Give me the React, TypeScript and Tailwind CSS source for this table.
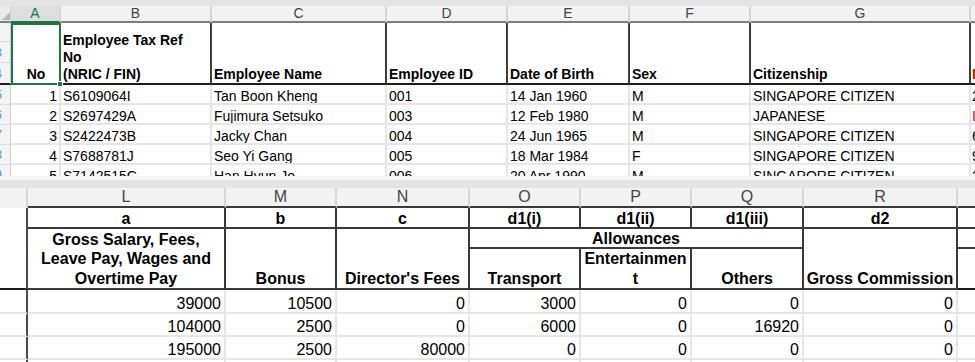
import React from 'react'

const topRows = [
  { n: '5', cells: ['1', 'S6109064I', 'Tan Boon Kheng', '001', '14 Jan 1960', 'M', 'SINGAPORE CITIZEN'], h: '2', hRed: false },
  { n: '6', cells: ['2', 'S2697429A', 'Fujimura Setsuko', '003', '12 Feb 1980', 'M', 'JAPANESE'], h: 'I', hRed: true },
  { n: '7', cells: ['3', 'S2422473B', 'Jacky Chan', '004', '24 Jun 1965', 'M', 'SINGAPORE CITIZEN'], h: '6', hRed: false },
  { n: '8', cells: ['4', 'S7688781J', 'Seo Yi Gang', '005', '18 Mar 1984', 'F', 'SINGAPORE CITIZEN'], h: '9', hRed: false },
  { n: '9', cells: ['5', 'S7142515C', 'Han Hyun Jo', '006', '20 Apr 1990', 'M', 'SINGAPORE CITIZEN'], h: '2', hRed: false },
]

const bottomRows = [
  ['39000', '10500', '0', '3000', '0', '0', '0'],
  ['104000', '2500', '0', '6000', '0', '16920', '0'],
  ['195000', '2500', '80000', '0', '0', '0', '0'],
  ['', '', '', '', '', '', ''],
]

function RowNum({ n }: { n: string }) {
  // only the right edge of the row number shows in the narrow header column
  return (
    <div className="w-[14px] ml-[-12px] shrink-0 text-right text-[13px] leading-none text-[#4f97dd]">{n}</div>
  )
}

function TopPane() {
  const colHead = 'flex items-center justify-center bg-[#f2f2f2] border-r-2 border-r-[#d6d6d6] border-b-2 border-b-[#7d7d7d] text-[14px] text-[#444]'
  const head = 'flex flex-col justify-end px-[2px] font-bold leading-[17px] border-r-2 border-r-[#3c3c3c] border-b-2 border-b-[#1c1c1c]'
  const cell = 'flex items-end px-[2px] leading-[14px] whitespace-nowrap overflow-hidden border-r-2 border-b-2 border-[#e6e6e6]'

  return (
    <div className="h-[176px] overflow-hidden bg-white">
      <div className="h-[6px] bg-[#e4e4e4]" />
      <div className="grid grid-cols-[11px_50px_151px_175px_121px_122px_121px_220px_4px] grid-rows-[17px_62px_20px_20px_20px_20px_20px] text-[14px] text-black">
        {/* column letters */}
        <div className="flex items-end justify-end bg-[#ececec] border-r border-r-[#d0d0d0] border-b-2 border-b-[#7d7d7d]">
          <svg width="8" height="8" viewBox="0 0 8 8" className="mb-[1px]">
            <polygon points="8,0 8,8 0,8" fill="#b9b9b9" />
          </svg>
        </div>
        <div className="flex items-center justify-center bg-[#dedede] border-r-2 border-r-[#d6d6d6] border-b-2 border-b-[#217346] text-[14px] text-[#217346]">A</div>
        <div className={colHead}>B</div>
        <div className={colHead}>C</div>
        <div className={colHead}>D</div>
        <div className={colHead}>E</div>
        <div className={colHead}>F</div>
        <div className={colHead}>G</div>
        <div className="bg-[#f2f2f2] border-b-2 border-b-[#7d7d7d]" />

        {/* header row */}
        <div className="flex flex-col overflow-hidden bg-[#f3f3f3] border-r border-r-[#d0d0d0] border-b-2 border-b-[#1c1c1c]">
          <div className="h-[19px] border-b border-[#dcdcdc]" />
          <div className="h-[21px] flex items-center border-b border-[#dcdcdc]"><RowNum n="3" /></div>
          <div className="flex-1 flex items-center"><RowNum n="4" /></div>
        </div>
        <div className="relative flex items-end justify-center font-bold leading-[17px] border-2 border-[#217346]">
          No
          <div className="absolute right-[-4px] bottom-[-4px] z-10 w-[6px] h-[6px] bg-[#217346] border border-white" />
        </div>
        <div className={head}>
          <div>Employee Tax Ref</div>
          <div>No</div>
          <div>(NRIC / FIN)</div>
        </div>
        <div className={head}>Employee Name</div>
        <div className={head}>Employee ID</div>
        <div className={head}>Date of Birth</div>
        <div className={head}>Sex</div>
        <div className={head}>Citizenship</div>
        <div className="flex items-end pl-[1px] font-bold leading-[17px] overflow-hidden text-[#9c2a00] border-b-2 border-b-[#1c1c1c]">D</div>

        {/* data rows */}
        {topRows.map((r) => (
          <React.Fragment key={r.n}>
            <div className="flex items-center overflow-hidden bg-[#f3f3f3] border-r border-r-[#d0d0d0] border-b border-b-[#dcdcdc]">
              <RowNum n={r.n} />
            </div>
            {r.cells.map((c, i) => (
              <div key={i} className={i === 0 ? cell + ' justify-end' : cell}>{c}</div>
            ))}
            <div className={r.hRed ? 'flex items-end pl-[1px] leading-[14px] overflow-hidden border-b-2 border-[#e6e6e6] text-[#9c2a00]' : 'flex items-end pl-[1px] leading-[14px] overflow-hidden border-b-2 border-[#e6e6e6]'}>
              {r.h}
            </div>
          </React.Fragment>
        ))}
      </div>
    </div>
  )
}

function BottomPane() {
  const colHead = 'flex items-center justify-center bg-[#f2f2f2] border-r-2 border-r-[#d6d6d6] border-b-2 border-b-[#3a3a3a] text-[16px] text-[#444]'
  const code = 'flex items-end justify-center font-bold leading-[16px] border-r-2 border-b-2 border-[#3a3a3a]'
  const head = 'flex flex-col items-center justify-end text-center font-bold leading-[19.5px] border-r-2 border-b-2 border-[#3a3a3a]'
  const num = 'flex items-end justify-end pr-[3px] leading-[17px] border-r-2 border-b-2 border-[#e6e6e6]'

  return (
    <div className="h-[174px] overflow-hidden bg-white">
      <div className="grid grid-cols-[28px_198px_111px_133px_111px_111px_112px_154px_17px] grid-rows-[20px_21px_20px_41px_24px_23px_23px_23px] text-[16px] text-black">
        {/* column letters */}
        <div className="bg-[#f2f2f2] border-r-2 border-r-[#d6d6d6]" />
        <div className={colHead}>L</div>
        <div className={colHead}>M</div>
        <div className={colHead}>N</div>
        <div className={colHead}>O</div>
        <div className={colHead}>P</div>
        <div className={colHead}>Q</div>
        <div className={colHead}>R</div>
        <div className="bg-[#f2f2f2] border-b-2 border-b-[#3a3a3a]" />

        {/* code row */}
        <div className="border-r-2 border-r-[#4a4a4a]" />
        <div className={code}>a</div>
        <div className={code}>b</div>
        <div className={code}>c</div>
        <div className={code}>d1(i)</div>
        <div className={code}>d1(ii)</div>
        <div className={code}>d1(iii)</div>
        <div className={code}>d2</div>
        <div className="border-b-2 border-[#3a3a3a]" />

        {/* header block */}
        <div className="row-span-2 border-r-2 border-r-[#4a4a4a] border-b-2 border-b-[#1c1c1c]" />
        <div className={head + ' row-span-2'}>
          <div>Gross Salary, Fees,</div>
          <div>Leave Pay, Wages and</div>
          <div>Overtime Pay</div>
        </div>
        <div className={head + ' row-span-2'}>Bonus</div>
        <div className={head + ' row-span-2'}>Director's Fees</div>
        <div className={code + ' col-span-3'}>Allowances</div>
        <div className={head + ' row-span-2'}>Gross Commission</div>
        <div className="border-b-2 border-[#3a3a3a]" />
        <div className={head}>Transport</div>
        <div className={head}>
          <div>Entertainmen</div>
          <div>t</div>
        </div>
        <div className={head}>Others</div>
        <div className="border-b-2 border-[#1c1c1c]" />

        {/* data rows */}
        {bottomRows.map((r, ri) => (
          <React.Fragment key={ri}>
            <div className="border-r-2 border-r-[#4a4a4a] border-b-2 border-b-[#e6e6e6]" />
            {r.map((v, i) => (
              <div key={i} className={num}>{v}</div>
            ))}
            <div className="border-b-2 border-[#e6e6e6]" />
          </React.Fragment>
        ))}
      </div>
    </div>
  )
}

export default function App() {
  return (
    <div className="w-[975px] h-[362px] overflow-hidden bg-white font-['Liberation_Sans',Arial,sans-serif]">
      <TopPane />
      {/* split bar between the frozen panes */}
      <div className="h-[12px] bg-[#e4e4e4] border-t-4 border-t-[#f6f6f6]" />
      <BottomPane />
    </div>
  )
}
